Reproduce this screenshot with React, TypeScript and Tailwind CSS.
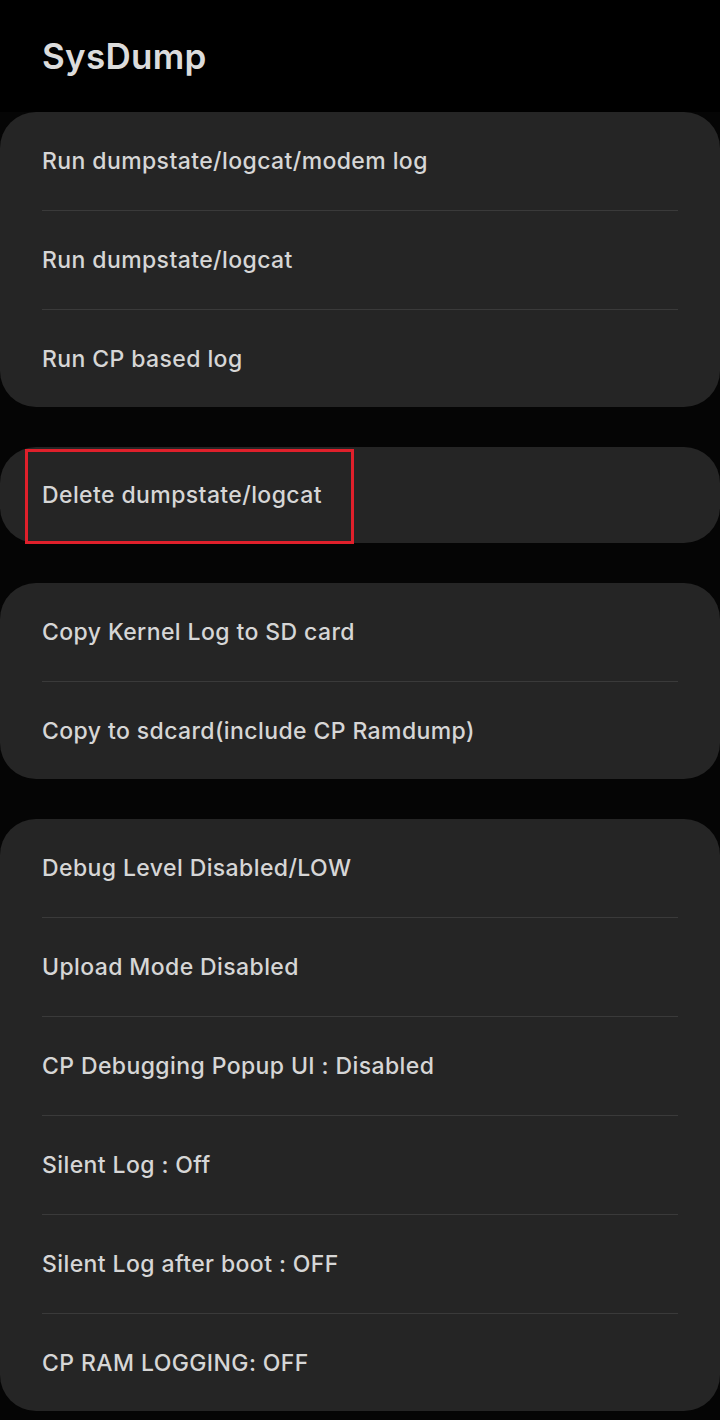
const groups: string[][] = [
  ['Run dumpstate/logcat/modem log', 'Run dumpstate/logcat', 'Run CP based log'],
  ['Delete dumpstate/logcat'],
  ['Copy Kernel Log to SD card', 'Copy to sdcard(include CP Ramdump)'],
  [
    'Debug Level Disabled/LOW',
    'Upload Mode Disabled',
    'CP Debugging Popup UI : Disabled',
    'Silent Log : Off',
    'Silent Log after boot : OFF',
    'CP RAM LOGGING: OFF',
  ],
]

function Row({ label, height, highlight }: { label: string, height: string, highlight?: boolean }) {
  return (
    <div className={`relative flex items-center px-[42px] pt-px ${height}`}>
      <span className="text-[23px] font-medium tracking-[0.4px] text-[#d6d6d6]">{label}</span>
      {highlight && (
        <div className="absolute left-[25px] top-[2px] h-[95px] w-[329px] border-[3px] border-[#e0202b]" />
      )}
    </div>
  )
}

export default function App() {
  return (
    <div
      className="min-h-[1420px] w-[720px] bg-[#050505] pb-10"
      style={{ fontFamily: 'Inter, Roboto, "Noto Sans", sans-serif' }}
    >
      <div className="flex h-[112px] items-center bg-black px-[42px] pt-px">
        <h1 className="text-[35px] font-semibold tracking-[0.3px] text-[#dcdcdc]">SysDump</h1>
      </div>
      <div className="flex flex-col gap-10">
        {groups.map((items, gi) => (
          <div key={gi} className="rounded-[36px] bg-[#252525]">
            {items.map((label, i) => {
              const edge = i === 0 || i === items.length - 1
              const height = items.length === 1 ? 'h-[96px]' : edge ? 'h-[97.5px]' : 'h-[98px]'
              return (
                <div key={label}>
                  {i > 0 && <div className="mx-[42px] h-px bg-[#3a3a3a]" />}
                  <Row label={label} height={height} highlight={label === 'Delete dumpstate/logcat'} />
                </div>
              )
            })}
          </div>
        ))}
      </div>
    </div>
  )
}
